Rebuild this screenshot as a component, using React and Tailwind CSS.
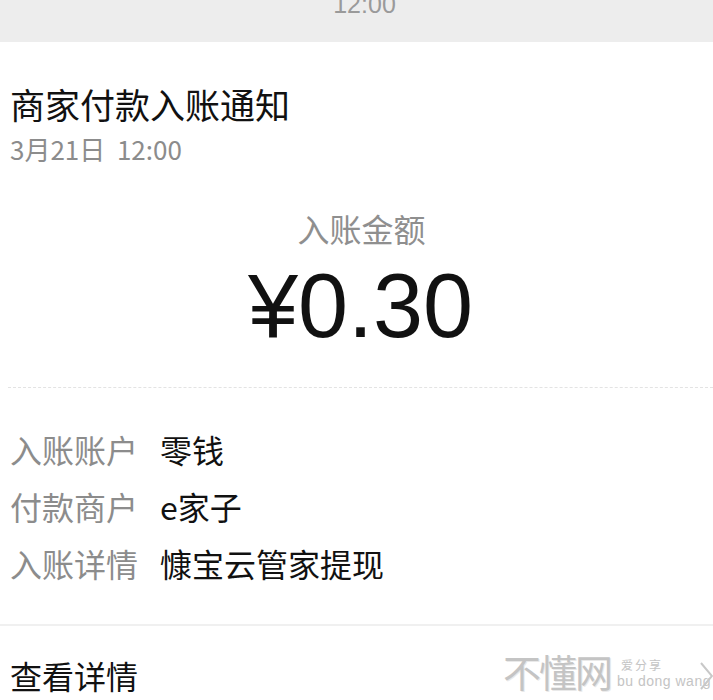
import React from "react";

export default function App() {
  const cjk = { fontFamily: '"Noto Sans CJK SC", "Noto Sans", sans-serif' };
  return (
    <div className="w-[713px] h-[700px] overflow-hidden bg-white relative" style={cjk}>
      <div className="h-[42px] bg-[#ededed] overflow-hidden flex justify-center">
        <div className="text-[25px] leading-[25px] -mt-[8px] ml-[16px] text-[#9a9a9a] font-['Liberation_Sans']">12:00</div>
      </div>
      <div className="pl-[10px] pt-[42px]">
        <div className="text-[35px] leading-[40px] text-[#111]">商家付款入账通知</div>
        <div className="mt-[10px] text-[26px] leading-[30px] text-[#8c8c8c]">3月21日&nbsp;&nbsp;12:00</div>
      </div>
      <div className="mt-[46px] text-center text-[32px] leading-[36px] text-[#8f8f8f] pl-[10px]">入账金额</div>
      <div className="mt-[12px] text-center text-[90px] leading-[96px] text-[#111] font-['Liberation_Sans'] pl-[8px]">¥0.30</div>
      <div className="mt-[33px] ml-[8px] border-t border-dashed border-[#e3e3e3]"></div>
      <div className="mt-[32px] pl-[10px]">
        {[
          ["入账账户", "零钱"],
          ["付款商户", "e家子"],
          ["入账详情", "慷宝云管家提现"],
        ].map(([k, v]) => (
          <div key={k} className="flex h-[57px] items-center text-[32px]">
            <div className="w-[150px] text-[#8c8c8c]">{k}</div>
            <div className="text-[#111]">{v}</div>
          </div>
        ))}
      </div>
      <div className="mt-[33px] h-[2px] bg-[#f0f0f0]"></div>
      <div className="mt-[29px] pl-[10px] flex items-center h-[40px] relative">
        <div className="text-[32px] leading-[40px] text-[#111]">查看详情</div>
        <div className="absolute left-[503px] top-[-6px] flex items-center gap-[2px] text-[#c4c4c4]">
          <div className="text-[38px] leading-[44px] tracking-[-2px]" style={{ textShadow: "1px 1px 0 #e9e9e9" }}>不懂网</div>
          <div className="flex flex-col leading-none ml-[4px] mt-[4px]">
            <div className="text-[12px] tracking-[2px] ml-[4px]">爱分享</div>
            <div className="text-[14px] font-['Liberation_Sans'] mt-[3px] tracking-[0.5px]">bu dong wang</div>
          </div>
        </div>
        <svg className="absolute left-[697px] top-[6px]" width="16" height="30" viewBox="0 0 16 30">
          <polyline points="4,2 15,15 4,28" fill="none" stroke="#c8c8c8" strokeWidth="2" />
        </svg>
      </div>
    </div>
  );
}
